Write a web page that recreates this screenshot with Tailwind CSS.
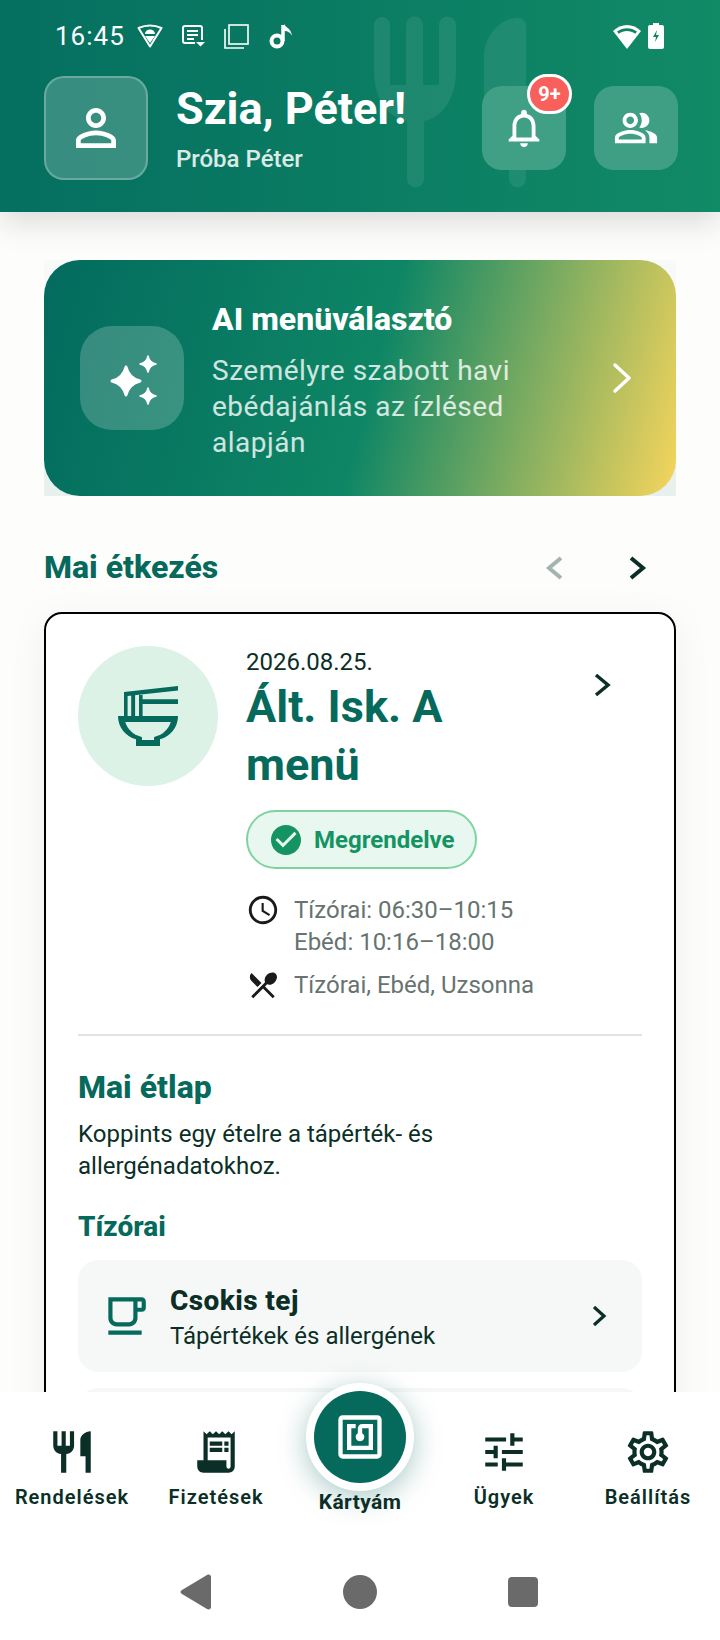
<!doctype html>
<html><head><meta charset="utf-8"><script src="https://cdn.jsdelivr.net/npm/@tailwindcss/browser@4"></script></head>
<body class="m-0">
<div class="relative w-[720px] h-[1640px] overflow-hidden bg-white font-['Roboto',sans-serif] text-[#0b2f26]">
  <div class="h-[1392px] overflow-hidden bg-[#fdfdfb]">
    <header class="relative h-[212px] bg-gradient-to-r from-[#056f60] to-[#118a66] shadow-[0_10px_30px_rgba(0,0,0,0.14)]">
      <svg class="absolute left-[372px] top-[16px] w-[160px] h-[172px] text-white/[0.08]" viewBox="0 0 160 172" fill="currentColor">
        <path d="M2 9a8 8 0 0 1 16 0v60h16V9a8 8 0 0 1 17 0v60h16V9a8 8 0 0 1 17 0v46c0 29-15 47-32 50v58a8 8 0 0 1-17 0v-58C17 102 2 84 2 55z"/>
        <path d="M154 10v153a8 8 0 0 1-17 0v-55h-25V40c0-20 16-38 34-38 4 0 8 3 8 8z"/>
      </svg>
      <div class="relative flex items-center justify-between h-[72px] pl-[55px] pr-[56px] text-white">
        <div class="flex items-center">
          <span class="text-[26px] leading-none tracking-[1px]">16:45</span>
          <svg class="ml-[12px] w-[26px] h-[24px]" viewBox="0 0 26 24" fill="none"><path d="M1.500 4Q13-1 24.500 4L13 22.500z" stroke="#fff" stroke-width="2" stroke-linejoin="round"/><path d="M8 12h10l-5 7zM8 10a5 4.500 0 0 1 10 0z" fill="#fff"/></svg>
          <svg class="ml-[19px] w-[23px] h-[22px]" viewBox="0 0 23 22" fill="none" stroke="#fff" stroke-width="2"><path d="M13 18H3a2 2 0 0 1-2-2V3a2 2 0 0 1 2-2h15a2 2 0 0 1 2 2v12"/><path d="M5 6h11M5 10h11M5 14h7"/><path d="M14 17h9l-4.500 4.500z" fill="#fff" stroke="none"/></svg>
          <svg class="ml-[19px] w-[25px] h-[25px]" viewBox="0 0 25 25" fill="none" stroke="#fff" stroke-width="1.600"><rect x="5" y="1" width="19" height="19"/><path d="M1 5v19h19"/></svg>
          <svg class="ml-[20px] w-[24px] h-[26px]" viewBox="0 0 24 26" fill="none" stroke="#fff"><circle cx="8" cy="18" r="5.500" stroke-width="4"/><path d="M14 18V2" stroke-width="3.500"/><path d="M15 1c2 4 7 4 8 12-1-3-4-5-8-5z" fill="#fff" stroke="none"/></svg>
        </div>
        <div class="flex items-center gap-[6px]">
          <svg class="w-[30px] h-[25px]" viewBox="0 0 30 25" fill="#fff"><path d="M1 7C9-1 21-1 29 7L15 25z"/><path d="M5 7.500c6-4.500 14-4.500 20 0l-1.800 2.200c-5-3.500-11.400-3.500-16.400 0z" fill="#0f8465"/></svg>
          <svg class="w-[16px] h-[26px]" viewBox="0 0 16 26"><path d="M5 0h6v2h3a2 2 0 0 1 2 2v20a2 2 0 0 1-2 2H2a2 2 0 0 1-2-2V4a2 2 0 0 1 2-2h3z" fill="#fff"/><path d="M9 7 5 14h3l-1 5 4-7H8z" fill="#0f8465"/></svg>
        </div>
      </div>
      <div class="relative flex items-center px-[44px] pt-[4px]">
        <div class="w-[104px] h-[104px] rounded-[20px] bg-white/20 border-2 border-white/25 flex items-center justify-center shrink-0">
          <svg class="w-[60px] h-[60px]" viewBox="0 0 24 24" fill="#fff"><path d="M12 5.900c1.160 0 2.100.940 2.100 2.100s-.940 2.100-2.100 2.100S9.900 9.160 9.900 8s.940-2.100 2.100-2.100m0 9c2.970 0 6.100 1.460 6.100 2.100v1.100H5.900V17c0-.640 3.130-2.100 6.100-2.100M12 4C9.790 4 8 5.790 8 8s1.790 4 4 4 4-1.790 4-4-1.790-4-4-4zm0 9c-2.670 0-8 1.340-8 4v3h16v-3c0-2.660-5.330-4-8-4z"/></svg>
        </div>
        <div class="ml-[28px]">
          <div class="text-[45px] leading-[52px] font-bold text-white whitespace-nowrap">Szia, Péter!</div>
          <div class="text-[24px] leading-[30px] font-medium text-white/85 mt-[9px]">Próba Péter</div>
        </div>
        <div class="absolute left-[482px] top-[14px] w-[84px] h-[84px] rounded-[20px] bg-[#3fa085] flex items-center justify-center">
          <svg class="w-[46px] h-[46px]" viewBox="0 0 24 24" fill="#fff"><path d="M12 22c1.100 0 2-.900 2-2h-4c0 1.100.900 2 2 2zm6-6v-5c0-3.070-1.630-5.640-4.500-6.320V4c0-.830-.670-1.500-1.500-1.500s-1.500.670-1.500 1.500v.680C7.640 5.360 6 7.920 6 11v5l-2 2v1h16v-1l-2-2zm-2 1H8v-6c0-2.480 1.510-4.500 4-4.500s4 2.020 4 4.500v6z"/></svg>
        </div>
        <div class="absolute left-[527px] top-[2px] w-[45px] h-[40px] rounded-full bg-[#f95f5b] border-[3px] border-white flex items-center justify-center text-white text-[20px] font-bold leading-none">9+</div>
        <div class="absolute left-[594px] top-[14px] w-[84px] h-[84px] rounded-[20px] bg-[#3f9f84] flex items-center justify-center">
          <svg class="w-[46px] h-[46px]" viewBox="0 0 24 24" fill="#fff"><path d="M16.670 13.130C18.040 14.060 19 15.320 19 17v3h4v-3c0-2.180-3.570-3.470-6.330-3.870z"/><path d="M15 12c2.210 0 4-1.790 4-4s-1.790-4-4-4c-.470 0-.910.100-1.330.240C14.500 5.270 15 6.580 15 8s-.500 2.730-1.330 3.760c.420.140.860.240 1.330.240z"/><path d="M9 12c2.210 0 4-1.790 4-4s-1.790-4-4-4-4 1.790-4 4 1.790 4 4 4zm0-6c1.100 0 2 .900 2 2s-.900 2-2 2-2-.900-2-2 .900-2 2-2z"/><path d="M9 13c-2.670 0-8 1.340-8 4v3h16v-3c0-2.660-5.330-4-8-4zm6 5H3v-.990C3.200 16.290 6.300 15 9 15s5.800 1.290 6 2z"/></svg>
        </div>
      </div>
    </header>
    <main class="px-[44px] pt-[48px]">
      <section class="relative h-[236px] bg-gradient-to-b from-[#f8faf9] to-[#e8f0ee]">
        <div class="absolute inset-0 rounded-[36px] bg-[linear-gradient(105deg,#036b5e_0%,#0e8665_52%,#f6d55c_100%)] flex items-center pl-[36px]">
          <div class="w-[104px] h-[104px] rounded-[32px] bg-white/20 flex items-center justify-center">
            <svg class="w-[48px] h-[50px] ml-[3px] mt-[3px]" viewBox="0 0 48 50" fill="#fff"><path d="M16 12c2 8 6 12 14 14-8 2-12 6-14 14-2-8-6-12-14-14 8-2 12-6 14-14z" stroke="#fff" stroke-width="3" stroke-linejoin="round"/><path d="M38 1c1 5 3 7 8 8-5 1-7 3-8 8-1-5-3-7-8-8 5-1 7-3 8-8zM38 33c1 5 3 7 8 8-5 1-7 3-8 8-1-5-3-7-8-8 5-1 7-3 8-8z" stroke="#fff" stroke-width="1.500" stroke-linejoin="round"/></svg>
          </div>
          <div class="ml-[28px] w-[340px] mt-[4px]">
            <div class="text-[32px] leading-[40px] font-[800] text-white">AI menüválasztó</div>
            <div class="text-[28px] leading-[36px] mt-[14px] text-white/80 tracking-[0.5px]">Személyre szabott havi ebédajánlás az ízlésed alapján</div>
          </div>
          <svg class="absolute left-[568px] top-[102px] w-[20px] h-[32px]" viewBox="0 0 20 32" fill="none" stroke="#fff" stroke-width="3.500" stroke-linecap="round" stroke-linejoin="round"><path d="M3 3l14 13L3 29"/></svg>
        </div>
      </section>
      <div class="flex items-center h-[40px] mt-[51px] relative">
        <h2 class="text-[32px] leading-[40px] font-[800] text-[#05695c]">Mai étkezés</h2>
        <svg class="absolute left-[498px] top-[8px] w-[26px] h-[26px]" viewBox="0 0 26 26" fill="none" stroke="#a3b5b0" stroke-width="4"><path d="M19 3 7 13l12 10"/></svg>
        <svg class="absolute left-[580px] top-[8px] w-[26px] h-[26px]" viewBox="0 0 26 26" fill="none" stroke="#0b2f26" stroke-width="4"><path d="M7 3l12 10-12 10"/></svg>
      </div>
      <section class="relative mt-[25px] border-2 border-black rounded-[18px] bg-white px-[32px] pt-[32px] h-[900px] shadow-[0_8px_40px_rgba(0,0,0,0.06)]">
        <div class="flex">
          <div class="w-[140px] h-[140px] rounded-full bg-[#dcf2e7] flex items-center justify-center shrink-0">
            <svg class="w-[72px] h-[72px]" viewBox="0 0 24 24" fill="#05695c"><path fill-rule="evenodd" d="M2 12h20c0 3.690-2.470 6.800-6 7.770V22H8v-2.230C4.470 18.800 2 15.690 2 12zM4.400 14c.700 2.400 2.700 4.300 5.300 4.900.300.100.300.300.300.500v.600h4v-.600c0-.200 0-.400.300-.500 2.600-.600 4.600-2.500 5.300-4.900z"/><path d="M4 3.990 22 2v1.510L5.200 5.300V12H4zM6.400 5h1.300v7H6.400zM9 5h1.200v1.400H22V8H10.200v4H9z"/></svg>
          </div>
          <div class="ml-[28px] -mt-[1px] flex-1">
            <div class="flex">
              <div class="w-[280px]">
                <div class="text-[24px] leading-[28px] mt-[3px]">2026.08.25.</div>
                <div class="text-[45px] leading-[58px] font-bold text-[#05695c] mt-[2px]">Ált. Isk. A menü</div>
              </div>
              <svg class="ml-[65px] mt-[27px] w-[24px] h-[26px]" viewBox="0 0 24 26" fill="none" stroke="#0b2f26" stroke-width="3.500"><path d="M5 3l12 10L5 23"/></svg>
            </div>
            <div class="flex items-center h-[59px] w-[231px] mt-[16px] rounded-full bg-[#e8f7ef] border-2 border-[#7fd3a0] pl-[20px]">
              <svg class="w-[36px] h-[36px]" viewBox="0 0 24 24" fill="#149462"><path d="M12 2C6.480 2 2 6.480 2 12s4.480 10 10 10 10-4.480 10-10S17.520 2 12 2zm-2 15-5-5 1.410-1.410L10 14.170l7.590-7.590L19 8l-9 9z"/></svg>
              <span class="ml-[10px] text-[24px] font-bold text-[#149462]">Megrendelve</span>
            </div>
            <div class="flex mt-[25px]">
              <svg class="w-[34px] h-[34px] -mt-[1px]" viewBox="0 0 24 24" fill="#1a1a1a"><path d="M11.990 2C6.470 2 2 6.480 2 12s4.470 10 9.990 10C17.520 22 22 17.520 22 12S17.520 2 11.990 2zM12 20c-4.420 0-8-3.580-8-8s3.580-8 8-8 8 3.580 8 8-3.580 8-8 8zM12.500 7H11v6l5.250 3.150.750-1.230-4.500-2.670z"/></svg>
              <div class="ml-[14px] text-[24px] leading-[32px] text-[#66736f]">Tízórai: 06:30–10:15<br>Ebéd: 10:16–18:00</div>
            </div>
            <div class="flex items-center mt-[10px]">
              <svg class="w-[34px] h-[34px]" viewBox="0 0 24 24" fill="#1a1a1a"><path d="M8.100 13.340l2.830-2.830L3.910 3.500c-1.560 1.560-1.560 4.090 0 5.660l4.190 4.180zm6.780-1.810c1.530.710 3.680.210 5.270-1.380 1.910-1.910 2.280-4.650.810-6.120-1.460-1.460-4.200-1.100-6.120.810-1.590 1.590-2.090 3.740-1.380 5.270L3.700 19.870l1.410 1.410L12 14.410l6.880 6.880 1.410-1.410L13.410 13l1.470-1.470z"/></svg>
              <div class="ml-[14px] text-[24px] leading-[32px] text-[#66736f]">Tízórai, Ebéd, Uzsonna</div>
            </div>
          </div>
        </div>
        <div class="h-[2px] bg-[#e1e4e2] mt-[32px]"></div>
        <h3 class="text-[32px] leading-[40px] font-[800] text-[#05695c] mt-[31px]">Mai étlap</h3>
        <p class="text-[24px] leading-[32px] mt-[11px] w-[520px]">Koppints egy ételre a tápérték- és allergénadatokhoz.</p>
        <h4 class="text-[28px] leading-[34px] font-[800] text-[#05695c] mt-[28px]">Tízórai</h4>
        <div class="relative flex items-center h-[112px] mt-[16px] rounded-[20px] bg-[#f6f8f7] pl-[22px]">
          <svg class="w-[50px] h-[50px]" viewBox="0 0 24 24" fill="#05695c"><path d="M20 3H4v10c0 2.210 1.790 4 4 4h6c2.210 0 4-1.790 4-4v-3h2c1.110 0 2-.890 2-2V5c0-1.110-.890-2-2-2zm-4 10c0 1.100-.900 2-2 2H8c-1.100 0-2-.900-2-2V5h10v8zm4-5h-2V5h2v3zM4 19h16v2H4z"/></svg>
          <div class="ml-[20px] mt-[4px]">
            <div class="text-[28px] leading-[34px] font-[800] tracking-[0.4px]">Csokis tej</div>
            <div class="text-[24px] leading-[32px] mt-[2px]">Tápértékek és allergének</div>
          </div>
          <svg class="absolute left-[511px] top-[44px] w-[20px] h-[24px]" viewBox="0 0 20 24" fill="none" stroke="#0b2f26" stroke-width="3.200"><path d="M5 3l10 9-10 9"/></svg>
        </div>
        <div class="h-[112px] mt-[16px] rounded-[20px] bg-[#f6f8f7]"></div>
      </section>
    </main>
  </div>
  <nav class="absolute left-0 top-[1392px] w-full h-[160px] bg-white">
    <div class="absolute left-0 top-[35px] w-[144px] flex flex-col items-center">
      <svg class="w-[50px] h-[50px]" viewBox="0 0 24 24" fill="#0b2f26"><path d="M11 9H9V2H7v7H5V2H3v7c0 2.120 1.660 3.840 3.750 3.970V22h2.500v-9.030C11.340 12.840 13 11.120 13 9V2h-2v7zm5-3v8h2.500v8H21V2c-2.760 0-5 2.240-5 4z"/></svg>
      <span class="text-[20px] leading-[26px] font-semibold tracking-[1px] mt-[7px]">Rendelések</span>
    </div>
    <div class="absolute left-[144px] top-[35px] w-[144px] flex flex-col items-center">
      <svg class="w-[50px] h-[50px]" viewBox="0 0 24 24" fill="#0b2f26"><path fill-rule="evenodd" d="M19.500 3.500 18 2l-1.500 1.500L15 2l-1.500 1.500L12 2l-1.500 1.500L9 2 7.500 3.500 6 2v14H3v3c0 1.660 1.340 3 3 3h12c1.660 0 3-1.340 3-3V2l-1.500 1.500zM19 19c0 .550-.450 1-1 1s-1-.450-1-1v-3H8V5h11v14zM9 7h6v2H9zM16 7h2v2h-2zM9 10h6v2H9zM16 10h2v2h-2z"/></svg>
      <span class="text-[20px] leading-[26px] font-semibold tracking-[1px] mt-[7px]">Fizetések</span>
    </div>
    <div class="absolute left-[306px] top-[-9px] w-[108px] h-[108px] rounded-full bg-white shadow-[0_6px_28px_rgba(5,105,92,0.35)] flex items-center justify-center">
      <div class="w-[92px] h-[92px] rounded-full bg-[#05695c] flex items-center justify-center">
        <svg class="w-[52px] h-[52px]" viewBox="0 0 24 24" fill="#fff"><path d="M20 2H4c-1.100 0-2 .900-2 2v16c0 1.100.900 2 2 2h16c1.100 0 2-.900 2-2V4c0-1.100-.900-2-2-2zm0 18H4V4h16v16zM18 6h-5c-1.100 0-2 .900-2 2v2.280c-.600.350-1 .980-1 1.720 0 1.100.900 2 2 2s2-.900 2-2c0-.740-.400-1.380-1-1.720V8h3v8H8V8h2V6H6v12h12V6z"/></svg>
      </div>
    </div>
    <div class="absolute left-[288px] top-[97px] w-[144px] text-center text-[21px] leading-[26px] font-bold tracking-[0.4px]">Kártyám</div>
    <div class="absolute left-[432px] top-[35px] w-[144px] flex flex-col items-center">
      <svg class="w-[50px] h-[50px]" viewBox="0 0 24 24" fill="#0b2f26"><path d="M3 17v2h6v-2H3zM3 5v2h10V5H3zm10 16v-2h8v-2h-8v-2h-2v6h2zM7 9v2H3v2h4v2h2V9H7zm14 4v-2H11v2h10zm-6-4h2V7h4V5h-4V3h-2v6z"/></svg>
      <span class="text-[20px] leading-[26px] font-semibold tracking-[1px] mt-[7px]">Ügyek</span>
    </div>
    <div class="absolute left-[576px] top-[35px] w-[144px] flex flex-col items-center">
      <svg class="w-[50px] h-[50px]" viewBox="0 0 24 24" fill="#0b2f26"><path d="M19.430 12.980c.040-.320.070-.640.070-.980 0-.340-.030-.660-.070-.980l2.110-1.650c.190-.150.240-.420.120-.640l-2-3.460c-.090-.160-.260-.250-.440-.250-.060 0-.120.010-.170.030l-2.490 1c-.520-.400-1.080-.730-1.690-.980l-.380-2.650C14.460 2.180 14.250 2 14 2h-4c-.250 0-.460.180-.490.420l-.380 2.650c-.610.250-1.170.590-1.690.980l-2.490-1c-.060-.020-.120-.030-.180-.030-.170 0-.340.090-.430.250l-2 3.460c-.130.220-.070.490.120.640l2.110 1.650c-.040.320-.070.650-.070.980 0 .330.030.660.070.980l-2.110 1.650c-.190.150-.240.420-.120.640l2 3.460c.090.160.260.250.440.250.060 0 .120-.010.170-.030l2.490-1c.520.400 1.080.730 1.690.980l.380 2.650c.030.240.240.420.490.420h4c.250 0 .460-.180.490-.420l.380-2.650c.610-.250 1.170-.590 1.690-.980l2.490 1c.060.020.120.030.180.030.170 0 .340-.090.430-.250l2-3.460c.120-.220.070-.490-.120-.640l-2.110-1.650zm-1.980-1.710c.040.310.050.520.050.730 0 .210-.020.430-.050.730l-.140 1.130.890.700 1.080.840-.700 1.210-1.270-.510-1.040-.420-.900.680c-.430.320-.840.560-1.250.730l-1.060.430-.160 1.130-.200 1.350h-1.400l-.190-1.350-.160-1.130-1.060-.430c-.430-.180-.830-.410-1.230-.710l-.910-.700-1.060.430-1.270.510-.700-1.210 1.080-.840.890-.700-.140-1.130c-.030-.310-.050-.540-.050-.740s.020-.430.050-.730l.140-1.130-.890-.700-1.080-.840.700-1.210 1.270.510 1.040.42.900-.68c.430-.320.840-.560 1.250-.730l1.060-.43.160-1.130.200-1.350h1.390l.190 1.350.160 1.130 1.060.43c.430.180.830.410 1.230.710l.910.700 1.060-.43 1.270-.510.700 1.210-1.070.850-.890.700.140 1.130zM12 8c-2.210 0-4 1.790-4 4s1.790 4 4 4 4-1.790 4-4-1.790-4-4-4zm0 6c-1.100 0-2-.900-2-2s.900-2 2-2 2 .900 2 2-.900 2-2 2z"/></svg>
      <span class="text-[20px] leading-[26px] font-semibold tracking-[1px] mt-[7px]">Beállítás</span>
    </div>
  </nav>
  <div class="absolute left-0 top-[1552px] w-full h-[88px]">
    <svg class="absolute left-[180px] top-[22px] w-[34px] h-[36px]" viewBox="0 0 34 36" fill="#6a6a6a"><path d="M2 16 27 1c2-1 4 0 4 2v30c0 2-2 3-4 2L2 20c-2-1-2-3 0-4z"/></svg>
    <div class="absolute left-[343px] top-[23px] w-[34px] h-[34px] rounded-full bg-[#6a6a6a]"></div>
    <div class="absolute left-[508px] top-[25px] w-[30px] h-[30px] rounded-[4px] bg-[#6a6a6a]"></div>
  </div>
</div>
</body></html>
